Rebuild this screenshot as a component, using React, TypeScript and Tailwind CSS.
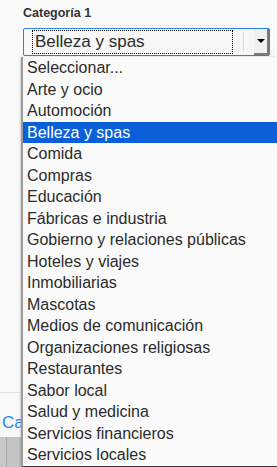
import React from 'react'

const OPTIONS = [
  'Seleccionar...',
  'Arte y ocio',
  'Automoción',
  'Belleza y spas',
  'Comida',
  'Compras',
  'Educación',
  'Fábricas e industria',
  'Gobierno y relaciones públicas',
  'Hoteles y viajes',
  'Inmobiliarias',
  'Mascotas',
  'Medios de comunicación',
  'Organizaciones religiosas',
  'Restaurantes',
  'Sabor local',
  'Salud y medicina',
  'Servicios financieros',
  'Servicios locales',
]

const SELECTED = 3

export default function App() {
  return (
    <div
      className="relative w-[277px] h-[467px] overflow-hidden bg-[#f9f9f9]"
      style={{ fontFamily: '"Liberation Sans", Arial, sans-serif' }}
    >
      {/* form field */}
      <div className="pl-[23px] pt-[6px]">
        <div className="text-[12.5px] font-bold text-[#333] leading-[15px]">Categoría 1</div>
        <div className="mt-[7px] flex h-[28px] w-[247px] items-center border border-[#2a7ff0] bg-[#f7f7f7] rounded-[2px] pl-[8px] pr-0">
          <div className="flex h-[24px] flex-1 items-center border border-dotted border-black pl-[2px] text-[17px] text-[#2b2b2b]">
            Belleza y spas
          </div>
          <div className="mx-[10px] h-[20px] w-px bg-[#ddd]" />
          <div className="flex h-[26px] w-[15px] items-center justify-center border-r-2 border-b-2 border-[#7a7a7a] bg-[#f0f0f0]">
            <div className="h-0 w-0 border-l-[4px] border-r-[4px] border-t-[4px] border-l-transparent border-r-transparent border-t-black" />
          </div>
        </div>
      </div>

      {/* content under the dropdown */}
      <div className="absolute left-0 top-[392px] h-px w-[30px] bg-[#e2e2e2]" />
      <div className="absolute left-[2px] top-[410px] text-[17px] text-[#2a86e8]">Ca</div>
      <div className="absolute left-0 top-[437px] flex h-[30px] w-[30px]">
        <div className="h-full w-[7px] bg-[#c7c7c7] border-r border-[#a9a9a9]" />
        <div className="h-full flex-1 bg-[#c4c4c4]" />
      </div>

      {/* open option list */}
      <div className="absolute left-[21px] top-[57px] w-[270px] border-l-2 border-b-2 border-[#9a9a9a] border-b-[#3a3a3a] bg-[#fafafa] shadow-[-1px_0_2px_rgba(0,0,0,0.15)]">
        {OPTIONS.map((o, i) => (
          <div
            key={o}
            className={
              'h-[21.5px] pl-[4px] text-[16px] leading-[21.5px] whitespace-nowrap ' +
              (i === SELECTED ? 'bg-[#0b5fd8] text-white' : 'text-[#2b2b2b]')
            }
          >
            {o}
          </div>
        ))}
      </div>
    </div>
  )
}
